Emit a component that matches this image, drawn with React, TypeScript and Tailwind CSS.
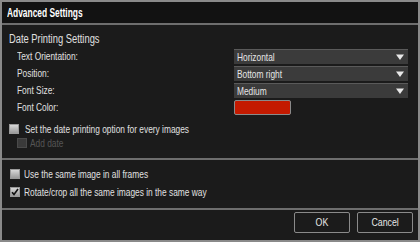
import React from "react";

const font = { fontFamily: '"Liberation Sans", Arial, sans-serif' };

function T({ children, className = "origin-left scale-x-[0.76]" }: { children: React.ReactNode; className?: string }) {
  return <span className={"inline-block whitespace-nowrap " + className}>{children}</span>;
}

function Dropdown({ value }: { value: string }) {
  return (
    <div className="flex h-[15px] w-[174px] items-center justify-between border-t border-[#5a5a5a] bg-[#3b3b3b] pl-[3px] pr-[4px] text-[11px] text-[#e6e6e6]">
      <T>{value}</T>
      <svg width="8" height="6" viewBox="0 0 8 6">
        <path d="M0 0.5h8L4 6z" fill="#e8e8e8" />
      </svg>
    </div>
  );
}

function Checkbox({ checked = false, disabled = false }: { checked?: boolean; disabled?: boolean }) {
  return (
    <div
      className={
        disabled
          ? "flex h-[10px] w-[10px] shrink-0 items-center justify-center border border-[#4a4a4a] bg-[#3a3a3a]"
          : "flex h-[10px] w-[10px] shrink-0 items-center justify-center border border-[#9a9a9a] bg-gradient-to-b from-[#d8d8d8] to-[#9a9a9a]"
      }
    >
      {checked && (
        <svg width="8" height="8" viewBox="0 0 8 8">
          <path d="M1 4.2l2 2.2L7 1" stroke="#111" strokeWidth="1.6" fill="none" />
        </svg>
      )}
    </div>
  );
}

function Row({ label, children }: { label: string; children: React.ReactNode }) {
  return (
    <div className="flex h-[15px] items-center">
      <span className="w-[232px] pl-[15px] text-[11px] leading-none text-[#e0e0e0]">
        <T>{label}</T>
      </span>
      {children}
    </div>
  );
}

export default function App() {
  return (
    <div style={font} className="flex h-[242px] w-[420px] flex-col border-2 border-[#8a8a8a] bg-[#1b1b1b]">
      <div className="flex h-[21px] items-center bg-[#121212] pl-[5px] text-[12px] font-bold text-white">
        <T className="origin-left scale-x-[0.7]">Advanced Settings</T>
      </div>
      <div className="h-[2px] bg-[#6e6e6e]" />

      <div className="flex flex-col pt-[7px] pb-[8px]">
        <div className="flex h-[14px] items-center pl-[7px] text-[12px] text-[#e0e0e0]">
          <T className="origin-left scale-x-[0.78]">Date Printing Settings</T>
        </div>
        <div className="mt-[3px] flex flex-col gap-[2px]">
          <Row label="Text Orientation:">
            <Dropdown value="Horizontal" />
          </Row>
          <Row label="Position:">
            <Dropdown value="Bottom right" />
          </Row>
          <Row label="Font Size:">
            <Dropdown value="Medium" />
          </Row>
          <Row label="Font Color:">
            <div className="h-[15px] w-[57px] rounded-[2px] border border-[#8a8a8a] bg-[#c41a00]" />
          </Row>
        </div>
        <div className="mt-[7px] flex h-[14px] items-center gap-[6px] pl-[7px] text-[11px] text-[#e0e0e0]">
          <Checkbox />
          <T>Set the date printing option for every images</T>
        </div>
        <div className="flex h-[14px] items-center gap-[3px] pl-[15px] text-[11px] text-[#555555]">
          <Checkbox disabled />
          <T>Add date</T>
        </div>
      </div>

      <div className="h-[2px] bg-[#6e6e6e]" />

      <div className="flex flex-col gap-[4px] pt-[7px] pb-[9px] pl-[8px] text-[11px] text-[#e0e0e0]">
        <div className="flex h-[14px] items-center gap-[4px]">
          <Checkbox />
          <T>Use the same image in all frames</T>
        </div>
        <div className="flex h-[14px] items-center gap-[4px]">
          <Checkbox checked />
          <T>Rotate/crop all the same images in the same way</T>
        </div>
      </div>

      <div className="h-[2px] bg-[#6e6e6e]" />

      <div className="flex flex-1 items-start justify-end gap-[7px] pt-[2px] pr-[5px]">
        <button className="flex h-[21px] w-[56px] items-center justify-center rounded-[2px] border border-[#8a8a8a] bg-[#1b1b1b] text-[11px] text-[#e6e6e6]">
          <T className="origin-center scale-x-[0.8]">OK</T>
        </button>
        <button className="flex h-[21px] w-[56px] items-center justify-center rounded-[2px] border border-[#8a8a8a] bg-[#1b1b1b] text-[11px] text-[#e6e6e6]">
          <T className="origin-center scale-x-[0.8]">Cancel</T>
        </button>
      </div>
    </div>
  );
}
